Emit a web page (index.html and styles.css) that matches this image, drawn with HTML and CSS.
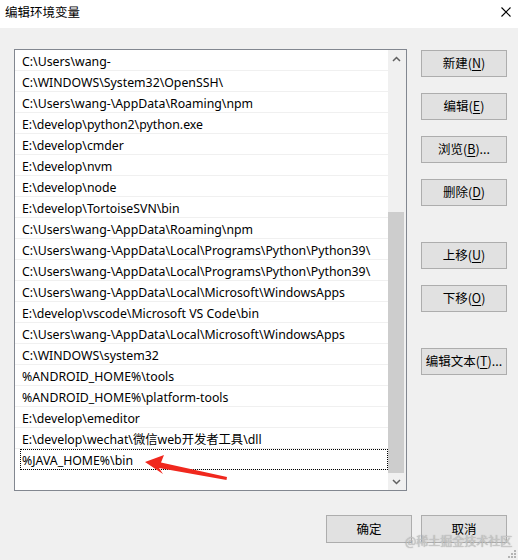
FILE: index.html
```html
<!DOCTYPE html>
<html lang="zh-CN">
<head>
<meta charset="utf-8">
<title>编辑环境变量</title>
<link rel="stylesheet" href="styles.css">
</head>
<body>
<div class="window">
  <div class="titlebar">
    <span class="title">编辑环境变量</span>
    <svg class="close" width="10" height="10" viewBox="0 0 10 10"><path d="M0.5 0.5L9.5 9.5M9.5 0.5L0.5 9.5" stroke="#000" stroke-width="1.1" fill="none"/></svg>
  </div>
  <div class="content">
    <div class="listbox">
      <ul class="rows">
        <li>C:\Users\wang-</li>
        <li>C:\WINDOWS\System32\OpenSSH\</li>
        <li>C:\Users\wang-\AppData\Roaming\npm</li>
        <li>E:\develop\python2\python.exe</li>
        <li>E:\develop\cmder</li>
        <li>E:\develop\nvm</li>
        <li>E:\develop\node</li>
        <li>E:\develop\TortoiseSVN\bin</li>
        <li>C:\Users\wang-\AppData\Roaming\npm</li>
        <li>C:\Users\wang-\AppData\Local\Programs\Python\Python39\</li>
        <li>C:\Users\wang-\AppData\Local\Programs\Python\Python39\</li>
        <li>C:\Users\wang-\AppData\Local\Microsoft\WindowsApps</li>
        <li>E:\develop\vscode\Microsoft VS Code\bin</li>
        <li>C:\Users\wang-\AppData\Local\Microsoft\WindowsApps</li>
        <li>C:\WINDOWS\system32</li>
        <li>%ANDROID_HOME%\tools</li>
        <li>%ANDROID_HOME%\platform-tools</li>
        <li>E:\develop\emeditor</li>
        <li>E:\develop\wechat\微信web开发者工具\dll</li>
        <li class="focused">%JAVA_HOME%\bin</li>
      </ul>
      <div class="scrollbar">
        <div class="sb-btn"><svg width="9" height="6" viewBox="0 0 9 6"><path d="M1 5L4.5 1.5L8 5" stroke="#606060" stroke-width="1.5" fill="none"/></svg></div>
        <div class="sb-track"><div class="sb-thumb"></div></div>
        <div class="sb-btn"><svg width="9" height="6" viewBox="0 0 9 6"><path d="M1 1L4.5 4.5L8 1" stroke="#606060" stroke-width="1.5" fill="none"/></svg></div>
      </div>
    </div>
    <div class="actions">
      <button class="btn">新建(<u>N</u>)</button>
      <button class="btn">编辑(<u>E</u>)</button>
      <button class="btn">浏览(<u>B</u>)...</button>
      <button class="btn">删除(<u>D</u>)</button>
      <button class="btn group">上移(<u>U</u>)</button>
      <button class="btn">下移(<u>O</u>)</button>
      <button class="btn group">编辑文本(<u>T</u>)...</button>
    </div>
  </div>
  <div class="footer">
    <button class="btn">确定</button>
    <button class="btn">取消</button>
  </div>
  <svg class="arrow" width="518" height="560" viewBox="0 0 518 560"><polygon points="145,462 164,455 161,462.5 227,477 226.5,480 159,468 163,474" fill="#f0281e"/></svg>
  <span class="watermark">@稀土掘金技术社区</span>
  <svg class="grip" width="10" height="10" viewBox="0 0 10 10"><g fill="#b4b4b4"><rect x="7" y="1" width="2" height="2"/><rect x="4" y="4" width="2" height="2"/><rect x="7" y="4" width="2" height="2"/><rect x="1" y="7" width="2" height="2"/><rect x="4" y="7" width="2" height="2"/><rect x="7" y="7" width="2" height="2"/></g></svg>
</div>
</body>
</html>
```
FILE: styles.css
```css
* { box-sizing: border-box; }
html, body { margin: 0; padding: 0; }
body {
  width: 518px;
  height: 560px;
  overflow: hidden;
  font-family: "Noto Sans", "Noto Sans CJK SC", sans-serif;
  font-size: 13px;
  color: #000;
  background: #f0f0f0;
}
.window {
  position: relative;
  width: 518px;
  height: 560px;
  background: #f0f0f0;
}
.titlebar {
  height: 28px;
  background: #fff;
  display: flex;
  align-items: center;
  justify-content: space-between;
  padding: 0 7px 0 5px;
}
.title {
  font-family: "Noto Sans CJK SC", sans-serif;
  font-size: 12.5px;
  margin-top: -5px;
}
.close { margin-top: -5px; }
.content {
  display: flex;
  gap: 14px;
  padding: 21px 0 0 14px;
}
.listbox {
  width: 393px;
  height: 442px;
  border: 1px solid #828790;
  background: #fff;
  display: flex;
}
.rows {
  list-style: none;
  margin: 0;
  padding: 0;
  flex: 1;
  min-width: 0;
}
.rows li {
  position: relative;
  height: 21px;
  line-height: 19px;
  padding-top: 2px;
  padding-left: 7px;
  box-shadow: inset 0 -1px 0 #f0f0f0;
  white-space: nowrap;
  overflow: hidden;
  font-family: "Noto Sans", "Noto Sans CJK SC", sans-serif;
  font-size: 12.3px;
}
.rows li.focused {
  outline: 1px dotted #000;
  outline-offset: -1px;
  margin-left: 5px;
  padding-left: 2px;
}
.scrollbar {
  width: 18px;
  display: flex;
  flex-direction: column;
  background: #f0f0f0;
}
.sb-btn {
  height: 17px;
  display: flex;
  align-items: center;
  justify-content: center;
  padding-right: 2px;
  background: #f0f0f0;
}
.sb-track {
  flex: 1;
  display: flex;
  flex-direction: column;
  justify-content: flex-end;
  padding: 0 2px 0 0;
}
.sb-thumb {
  height: 261px;
  background: #cdcdcd;
}
.actions {
  display: flex;
  flex-direction: column;
  gap: 16px;
  padding-top: 1px;
}
.btn {
  width: 86px;
  height: 27px;
  padding: 0;
  border: 1px solid #adadad;
  background: #e1e1e1;
  font-family: "Noto Sans CJK SC", sans-serif;
  font-size: 12.5px;
  color: #000;
  line-height: 1;
}
.btn u { text-underline-offset: 2px; }
.actions .group { margin-top: 20px; }
.footer {
  display: flex;
  justify-content: flex-end;
  gap: 9px;
  padding-right: 11px;
  margin-top: 24px;
}
.footer .btn { height: 28px; }
.arrow {
  position: absolute;
  left: 0;
  top: 0;
  pointer-events: none;
}
.watermark {
  position: absolute;
  left: 405px;
  top: 532px;
  white-space: nowrap;
  font-family: "Noto Sans CJK SC", sans-serif;
  font-size: 12px;
  color: rgba(205, 205, 205, 0.9);
  text-shadow: 0 0 1px rgba(110,110,110,0.7);
}
.grip {
  position: absolute;
  right: 1px;
  bottom: 1px;
}
```
